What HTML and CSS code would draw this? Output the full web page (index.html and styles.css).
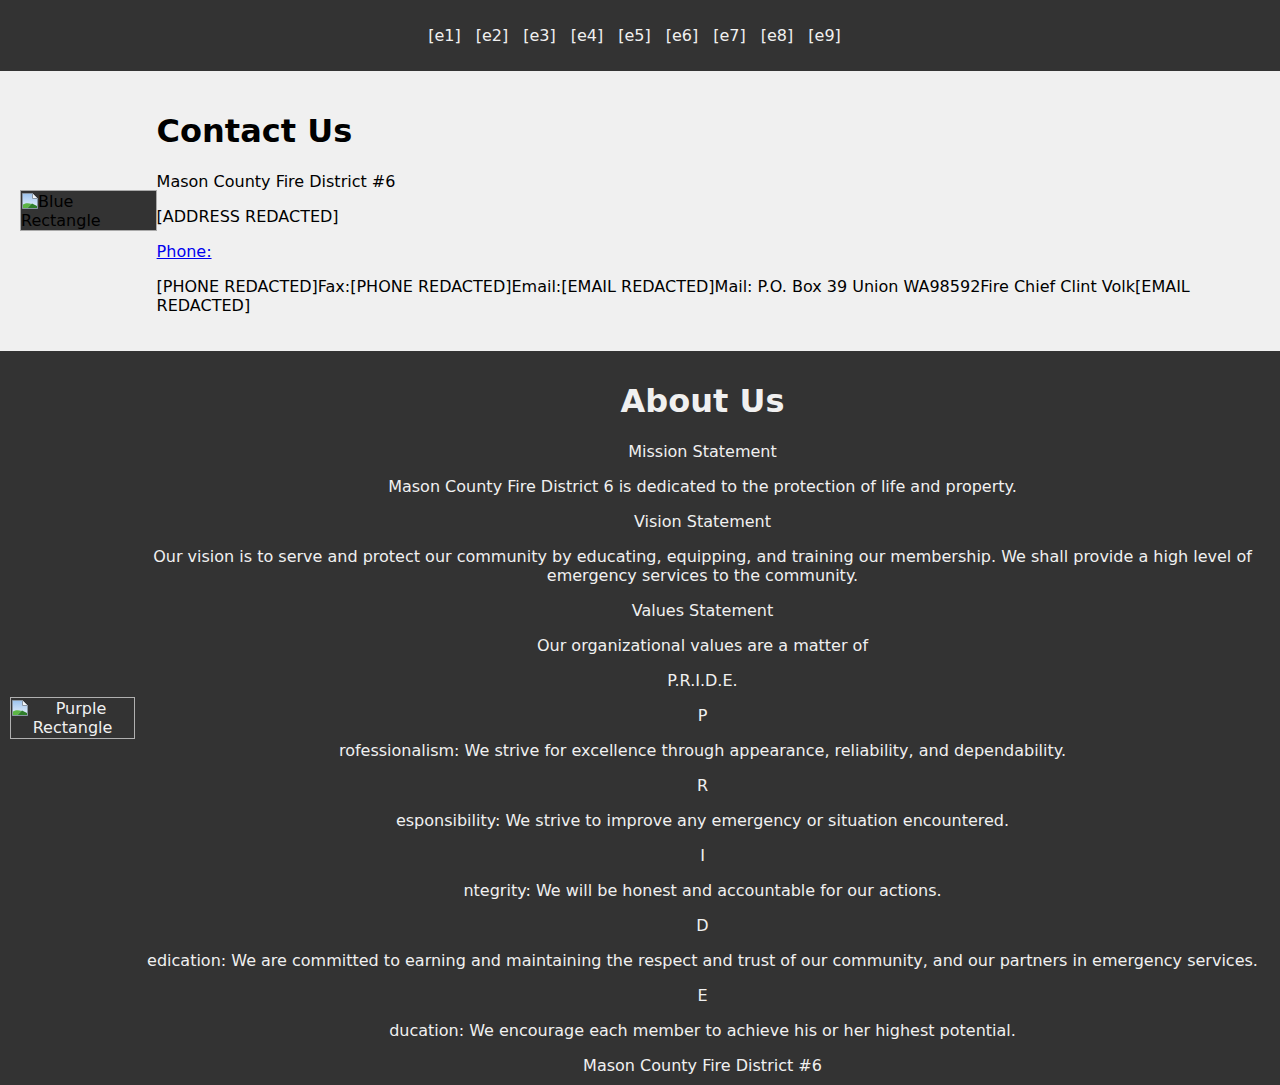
FILE: index.html
```html
<!DOCTYPE html>
<html lang="en">
<head>
<meta charset="utf-8">
<title>Mason County Fire District #6</title>
<link rel="stylesheet" href="styles.css">
</head>
<body>
<nav class="topnav">
  <ul class="nav-list">
    <li><a href="#">[e1]</a></li>
    <li><a href="#">[e2]</a></li>
    <li><a href="#">[e3]</a></li>
    <li><a href="#">[e4]</a></li>
    <li><a href="#">[e5]</a></li>
    <li><a href="#">[e6]</a></li>
    <li><a href="#">[e7]</a></li>
    <li><a href="#">[e8]</a></li>
    <li><a href="#">[e9]</a></li>
  </ul>
</nav>

<section class="contact">
  <span class="broken-img blue-img"><svg class="bi-icon" viewBox="0 0 16 16" width="16" height="16"><defs><linearGradient id="sky1" x1="0" y1="0" x2="0" y2="1"><stop offset="0" stop-color="#9cc3ee"/><stop offset="1" stop-color="#eaf2fb"/></linearGradient></defs><path d="M0.5 0.5h10l5 5v10h-15z" fill="url(#sky1)" stroke="#8a96a3" stroke-width="1"/><path d="M10.5 0.5v5h5" fill="#f4f6f8" stroke="#8a96a3" stroke-width="1"/><path d="M1 15 L1 11.5 C4 9.5 7 10 9.5 11 L5.5 15z" fill="#5cb544"/><path d="M5.5 15 L10 10.5 L15 13 L15 15z" fill="#2f7d2a"/></svg>Blue Rectangle</span>
  <div class="contact-body">
    <h1 class="title">Contact Us</h1>
    <p>Mason County Fire District #6</p>
    <p>[ADDRESS REDACTED]</p>
    <p><a class="phone-link" href="#">Phone:</a></p>
    <p>[PHONE REDACTED]Fax:[PHONE REDACTED]Email:[EMAIL REDACTED]Mail: P.O. Box 39 Union WA98592Fire Chief Clint Volk[EMAIL REDACTED]</p>
  </div>
</section>

<section class="about">
  <span class="broken-img purple-img"><svg class="bi-icon" viewBox="0 0 16 16" width="16" height="16"><defs><linearGradient id="sky2" x1="0" y1="0" x2="0" y2="1"><stop offset="0" stop-color="#9cc3ee"/><stop offset="1" stop-color="#eaf2fb"/></linearGradient></defs><path d="M0.5 0.5h10l5 5v10h-15z" fill="url(#sky2)" stroke="#8a96a3" stroke-width="1"/><path d="M10.5 0.5v5h5" fill="#f4f6f8" stroke="#8a96a3" stroke-width="1"/><path d="M1 15 L1 11.5 C4 9.5 7 10 9.5 11 L5.5 15z" fill="#5cb544"/><path d="M5.5 15 L10 10.5 L15 13 L15 15z" fill="#2f7d2a"/></svg>Purple Rectangle</span>
  <div class="about-body">
    <h1 class="title">About Us</h1>
    <p>Mission Statement</p>
    <p>Mason County Fire District 6 is dedicated to the protection of life and property.</p>
    <p>Vision Statement</p>
    <p>Our vision is to serve and protect our community by educating, equipping, and training our membership. We shall provide a high level of emergency services to the community.</p>
    <p>Values Statement</p>
    <p>Our organizational values are a matter of</p>
    <p>P.R.I.D.E.</p>
    <p>P</p>
    <p>rofessionalism: We strive for excellence through appearance, reliability, and dependability.</p>
    <p>R</p>
    <p>esponsibility: We strive to improve any emergency or situation encountered.</p>
    <p>I</p>
    <p>ntegrity: We will be honest and accountable for our actions.</p>
    <p>D</p>
    <p>edication: We are committed to earning and maintaining the respect and trust of our community, and our partners in emergency services.</p>
    <p>E</p>
    <p>ducation: We encourage each member to achieve his or her highest potential.</p>
    <p class="last">Mason County Fire District #6</p>
  </div>
</section>
</body>
</html>
```

FILE: styles.css
```css
html, body {
  margin: 0;
  padding: 0;
}
body {
  font-family: "DejaVu Sans", sans-serif;
  font-size: 16px;
  background: #333333;
}

.topnav {
  background: #333333;
  padding: 26px 0;
}
.nav-list {
  list-style: none;
  margin: 0;
  padding: 0 11px 0 0;
  display: flex;
  justify-content: center;
  gap: 15px;
  line-height: 19px;
}
.nav-list a {
  color: #f0f0f0;
  text-decoration: none;
}

.contact {
  background: #f0f0f0;
  color: #000;
  padding: 20px;
  display: flex;
  align-items: center;
}
.contact-body {
  flex: 1;
}
.title {
  font-size: 32px;
  font-weight: bold;
  margin: 21.44px 0;
}
p {
  margin: 16px 0;
}
.phone-link {
  color: #0000ee;
  text-decoration: underline;
}

.broken-img {
  display: inline-block;
  box-sizing: border-box;
  border: 1px solid #a9a9a9;
  padding-top: 1px;
  line-height: 19px;
  flex: none;
}
.bi-icon {
  float: left;
  margin: 1px 0 0 1px;
}
.blue-img {
  width: 136.6px;
  height: 41px;
  background: #333333;
  color: #000;
  text-align: left;
}
.purple-img {
  width: 125px;
  height: 42px;
  color: #f0f0f0;
  text-align: center;
  border-color: #b0b0b0;
}

.about {
  background: #333333;
  color: #f0f0f0;
  padding: 10px;
  display: flex;
  align-items: center;
  text-align: center;
}
.about-body {
  flex: 1;
}
.about p.last {
  margin-bottom: 0;
}
```
